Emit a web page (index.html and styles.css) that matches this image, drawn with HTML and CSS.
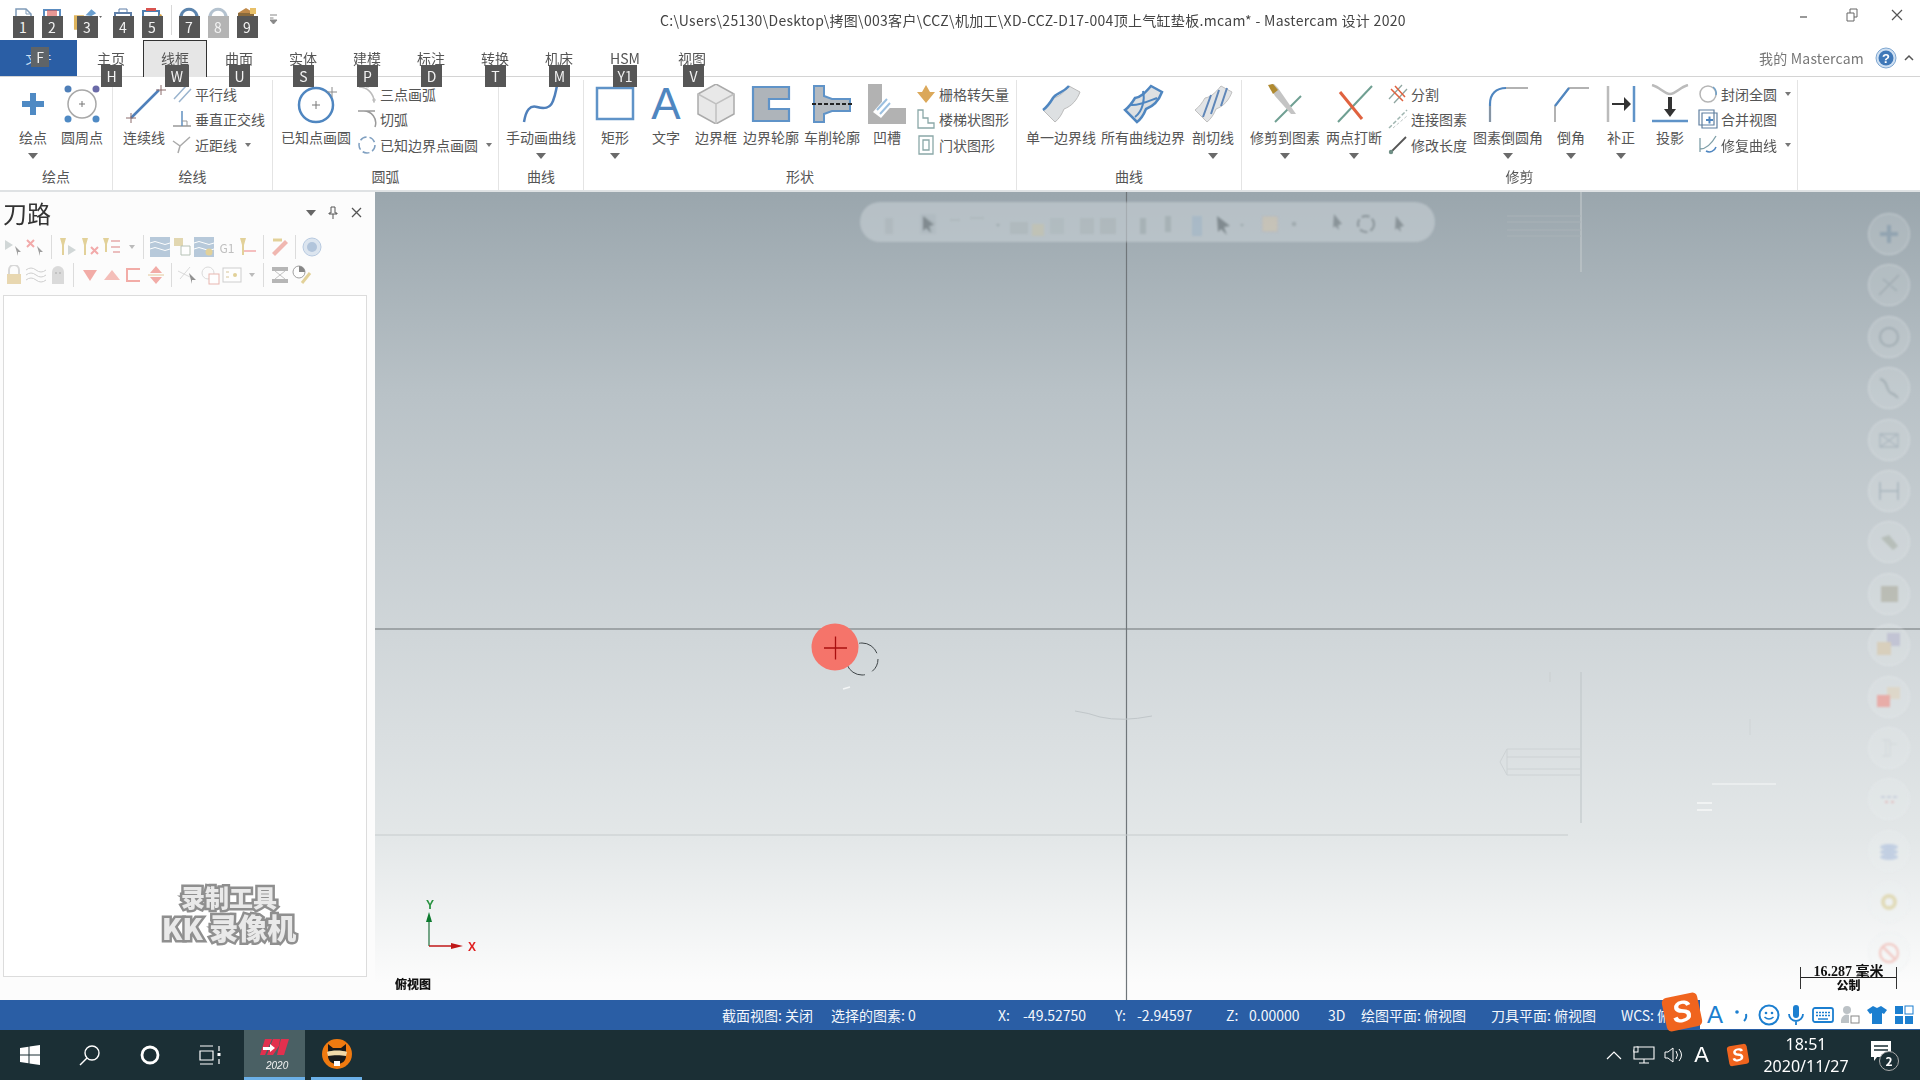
FILE: index.html
```html
<!DOCTYPE html>
<html lang="zh-CN">
<head>
<meta charset="utf-8">
<title>Mastercam 设计 2020</title>
<link rel="stylesheet" href="styles.css">
</head>
<body>
<header class="titlebar">
  <div class="quick">
    <div class="q"><svg width="22" height="24" viewBox="0 0 22 24"><path d="M4 2h10l5 5v16H4z" fill="#fff" stroke="#7f9bb8" stroke-width="1.5"/><path d="M14 2v5h5" fill="none" stroke="#7f9bb8"/></svg><span class="key">1</span></div>
    <div class="q"><svg width="22" height="24" viewBox="0 0 22 24"><path d="M3 3h16v18H3z" fill="#fff" stroke="#5a8cc0" stroke-width="2"/><path d="M6 3h10v6H6z" fill="#d9534f" opacity=".6"/></svg><span class="key">2</span></div>
    <div class="q gap6"><svg width="30" height="24" viewBox="0 0 30 24"><path d="M1 8h10l2 3h11v12H1z" fill="#dfb45c"/><path d="M13 8l6-6 5 4-5 3z" fill="#6a9fd0"/><path d="M27 9l3 0-1.500 2z" fill="#666"/></svg><span class="key">3</span></div>
    <div class="q gap7"><svg width="22" height="24" viewBox="0 0 22 24"><path d="M3 6h16v16H3z" fill="#fff" stroke="#5f7fa8" stroke-width="2"/><path d="M7 6V2h8v4" fill="none" stroke="#5f7fa8"/></svg><span class="key">4</span></div>
    <div class="q"><svg width="24" height="24" viewBox="0 0 24 24"><path d="M3 4h16v18H3z" fill="#fff" stroke="#4f7fb0" stroke-width="2"/><path d="M22 8l-5 12-2 1 0-3 5-11z" fill="#d9a03c"/><path d="M6 1h10v3H6z" fill="#d9534f"/></svg><span class="key">5</span></div>
    <div class="qsep"></div>
    <div class="q"><svg width="24" height="24" viewBox="0 0 24 24"><path d="M5 14a8 8 0 1 1 14 0" fill="none" stroke="#5c84ad" stroke-width="3"/><path d="M2 10l4 6 4-5z" fill="#5c84ad"/></svg><span class="key">7</span></div>
    <div class="q"><svg width="24" height="24" viewBox="0 0 24 24"><path d="M5 14a8 8 0 1 1 14 0" fill="none" stroke="#b4c2cf" stroke-width="3"/><path d="M22 10l-4 6-4-5z" fill="#b4c2cf"/></svg><span class="key dim">8</span></div>
    <div class="q"><svg width="24" height="24" viewBox="0 0 24 24"><path d="M3 6h16v16H3z" fill="#8a6a3c"/><path d="M3 6l8-5 8 5z" fill="#c08a4a"/><path d="M15 1h6v6h-6z" fill="#e8c068"/></svg><span class="key">9</span></div>
    <svg class="qmore" width="8" height="12" viewBox="0 0 8 12"><path d="M0 1h7M0 4l3.500 0M0 6h7l-3.500 4z" fill="#888" stroke="#888"/></svg>
  </div>
  <div class="title">C:\Users\25130\Desktop\拷图\003客户\CCZ\机加工\XD-CCZ-D17-004顶上气缸垫板.mcam* - Mastercam 设计 2020</div>
  <div class="winctl">
    <svg class="min" width="10" height="10" viewBox="0 0 10 10"><path d="M1 6h7" stroke="#777" stroke-width="1.500"/></svg>
    <svg class="restore" width="12" height="14" viewBox="0 0 12 14"><path d="M1 5h7v8H1zM4 5V1h7v8H8" fill="none" stroke="#666"/></svg>
    <svg class="close" width="12" height="12" viewBox="0 0 12 12"><path d="M1 1l10 10M11 1L1 11" stroke="#555" stroke-width="1.200"/></svg>
  </div>
</header>

<nav class="tabs">
  <div class="file"><span class="file-label">文件</span><span class="key key-f">F</span></div>
  <div class="tab">主页<span class="key">H</span></div>
  <div class="tab active">线框<span class="key">W</span></div>
  <div class="tab">曲面<span class="key">U</span></div>
  <div class="tab">实体<span class="key">S</span></div>
  <div class="tab">建模<span class="key">P</span></div>
  <div class="tab">标注<span class="key">D</span></div>
  <div class="tab">转换<span class="key">T</span></div>
  <div class="tab">机床<span class="key">M</span></div>
  <div class="tab tab-h">HSM<span class="key">Y1</span></div>
  <div class="tab tab-v">视图<span class="key">V</span></div>
  <div class="my">我的 Mastercam</div>
  <svg class="help" width="22" height="22" viewBox="0 0 22 22"><circle cx="11" cy="11" r="10" fill="#cfe0f2" stroke="#7ea6d0"/><circle cx="11" cy="11" r="7.500" fill="#3f78b8"/><text x="11" y="15.500" text-anchor="middle" class="svgq">?</text></svg>
  <svg class="collapse" width="10" height="8" viewBox="0 0 10 8"><path d="M1 6l4-4 4 4" fill="none" stroke="#555" stroke-width="1.500"/></svg>
</nav>

<section class="ribbon">
  <div class="group g1">
    <div class="gbody">
      <div class="big"><svg class="ic" viewBox="0 0 44 40"><path d="M19 9h6v8h8v6h-8v8h-6v-8h-8v-6h8z" fill="#4f8ac4"/></svg><span>绘点</span><i class="arrow"></i></div>
      <div class="big"><svg class="ic" viewBox="0 0 44 40"><circle cx="22" cy="20" r="14" fill="#fff" stroke="#a8a8a8" stroke-width="1.500"/><path d="M19 20h6M22 17v6" stroke="#777"/><circle cx="8" cy="5" r="3.500" fill="#4f7fb8"/><circle cx="36" cy="5" r="3.500" fill="#6a6aa8"/><circle cx="8" cy="35" r="3.500" fill="#4f8ac4"/><circle cx="36" cy="35" r="3.500" fill="#4f8ac4"/></svg><span>圆周点</span></div>
    </div>
    <div class="cap">绘点</div>
  </div>
  <div class="group g2">
    <div class="gbody">
      <div class="big"><svg class="ic" viewBox="0 0 44 40"><path d="M9 34L37 6" stroke="#4f80bb" stroke-width="2.500"/><path d="M4 34h10M9 29v10M34 6h10M39 1v10" stroke="#8a6a6a"/></svg><span>连续线</span></div>
      <div class="smalls">
        <div class="sm"><svg class="is" viewBox="0 0 20 20"><path d="M2 15L14 2M7 18L19 5" stroke="#9ab4ce" stroke-width="1.500"/></svg>平行线</div>
        <div class="sm"><svg class="is" viewBox="0 0 20 20"><path d="M1 17h18" stroke="#999" stroke-width="1.500"/><path d="M10 2v15" stroke="#5f8fbf" stroke-width="1.500"/><path d="M10 12h5v5" fill="none" stroke="#999"/></svg>垂直正交线</div>
        <div class="sm"><svg class="is" viewBox="0 0 20 20"><path d="M1 6l7 5-2 7M18 2l-10 9" fill="none" stroke="#aaa" stroke-width="1.500"/></svg>近距线<i class="tiny"></i></div>
      </div>
    </div>
    <div class="cap">绘线</div>
  </div>
  <div class="group g3">
    <div class="gbody">
      <div class="big"><svg class="ic" viewBox="0 0 44 40"><circle cx="22" cy="21" r="17" fill="#fff" stroke="#4f86c0" stroke-width="2.500"/><path d="M18 21h8M22 17v8" stroke="#777"/><path d="M33 8h10M38 3v10" stroke="#8a8a8a"/></svg><span>已知点画圆</span></div>
      <div class="smalls">
        <div class="sm"><svg class="is" viewBox="0 0 20 20"><path d="M2 3a15 15 0 0 1 15 15" fill="none" stroke="#bbb" stroke-width="1.500"/><path d="M15 16h4M17 14v5M1 2h3M9 3h3" stroke="#bbb"/></svg>三点画弧</div>
        <div class="sm"><svg class="is" viewBox="0 0 20 20"><path d="M1 2h17M6 2a12 12 0 0 1 12 16" fill="none" stroke="#9a9a9a" stroke-width="1.500"/></svg>切弧</div>
        <div class="sm"><svg class="is" viewBox="0 0 20 20"><circle cx="10" cy="10" r="8" fill="none" stroke="#7f9fc0" stroke-width="1.500" stroke-dasharray="7 3"/></svg>已知边界点画圆<i class="tiny"></i></div>
      </div>
    </div>
    <div class="cap">圆弧</div>
  </div>
  <div class="group g4">
    <div class="gbody">
      <div class="big"><svg class="ic" viewBox="0 0 44 40"><path d="M5 38c2-12 6-17 13-15s13 2 16-6 3-12 4-15" fill="none" stroke="#4f80bb" stroke-width="2.500"/></svg><span>手动画曲线</span><i class="arrow"></i></div>
    </div>
    <div class="cap">曲线</div>
  </div>
  <div class="group g5">
    <div class="gbody">
      <div class="big"><svg class="ic" viewBox="0 0 44 40"><rect x="4" y="4" width="36" height="31" fill="#fff" stroke="#5f93c8" stroke-width="2.500"/></svg><span>矩形</span><i class="arrow"></i></div>
      <div class="big"><div class="ic ic-a">A</div><span>文字</span></div>
      <div class="big"><svg class="ic" viewBox="0 0 44 40"><path d="M22 0l18 10v20L22 40 4 30V10z" fill="#e8e8e8" stroke="#aaa" stroke-width="1.500"/><path d="M4 10l18 10 18-10M22 20v20" fill="none" stroke="#c0c0c0" stroke-width="1.500"/></svg><span>边界框</span></div>
      <div class="big"><svg class="ic" viewBox="0 0 44 40"><path d="M4 3h36v12H20v10h20v12H4z" fill="#aeb4ba" stroke="#5f93c8" stroke-width="2.200"/></svg><span>边界轮廓</span></div>
      <div class="big"><svg class="ic" viewBox="0 0 44 40"><path d="M4 2h10v10l8 3h18v12H22l-8 3v8H4z" fill="#b4bac0" stroke="#5f93c8" stroke-width="2"/><path d="M2 20h40" stroke="#222" stroke-width="2" stroke-dasharray="4 2"/></svg><span>车削轮廓</span></div>
      <div class="big"><svg class="ic" viewBox="0 0 44 40"><path d="M3 0h14v24h24v16H3z" fill="#b2b2b2"/><path d="M8 28l14-16 8 6-14 16z" fill="#fff"/><path d="M12 26l10-11M15 30l10-11" stroke="#9cc0e0" stroke-width="2"/></svg><span>凹槽</span></div>
      <div class="smalls">
        <div class="sm"><svg class="is" viewBox="0 0 20 20"><path d="M10 1l4 7h5l-9 11L1 8h5z" fill="#dba85a"/></svg>栅格转矢量</div>
        <div class="sm"><svg class="is" viewBox="0 0 20 20"><path d="M2 1h5v8h5v5h6v5H2z" fill="#fff" stroke="#8aa8a8" stroke-width="1.300"/></svg>楼梯状图形</div>
        <div class="sm"><svg class="is" viewBox="0 0 20 20"><path d="M3 1h14v18H3zM7 5h6v10H7z" fill="none" stroke="#8aa8a8" stroke-width="1.300"/></svg>门状图形</div>
      </div>
    </div>
    <div class="cap">形状</div>
  </div>
  <div class="group g6">
    <div class="gbody">
      <div class="big"><svg class="ic" viewBox="0 0 44 40"><path d="M14 14c6-1 10-5 16-12l11 6c-3 8-8 14-16 17-2 5-5 10-9 13L4 26c4-3 7-7 10-12z" fill="#dde0e2" stroke="#bbb"/><path d="M4 26c4-3 7-7 10-12s10-5 16-12" fill="none" stroke="#4f86c0" stroke-width="2.500"/></svg><span>单一边界线</span></div>
      <div class="big"><svg class="ic" viewBox="0 0 44 40"><path d="M14 14c6-1 10-5 16-12l11 6c-3 8-8 14-16 17-2 5-5 10-9 13L4 26c4-3 7-7 10-12z" fill="#dde0e2" stroke="#4f86c0" stroke-width="2.500"/><path d="M10 21c8 1 20-5 26-7M22 7c2 8 0 20-8 26" fill="none" stroke="#4f86c0" stroke-width="2"/></svg><span>所有曲线边界</span></div>
      <div class="big"><svg class="ic" viewBox="0 0 44 40"><path d="M14 14c6-1 10-5 16-12l11 6c-3 8-8 14-16 17-2 5-5 10-9 13L4 26c4-3 7-7 10-12z" fill="#e2e4e6" stroke="#c0c0c0"/><path d="M12 33l8-22M20 30l8-24M30 22l6-18" stroke="#5f86b8" stroke-width="2"/></svg><span>剖切线</span><i class="arrow"></i></div>
    </div>
    <div class="cap">曲线</div>
  </div>
  <div class="group g7">
    <div class="gbody">
      <div class="big"><svg class="ic" viewBox="0 0 44 40"><path d="M12 38L38 12" stroke="#6f9f92" stroke-width="2"/><path d="M6 1l5-1 4 4 18 26-5 0L12 12z" fill="#c4c4c4"/><path d="M5 1l5-1 5 6-5 4z" fill="#b08a30"/></svg><span>修剪到图素</span><i class="arrow"></i></div>
      <div class="big"><svg class="ic" viewBox="0 0 44 40"><path d="M6 38L40 2" stroke="#6f9f92" stroke-width="2"/><path d="M8 8l22 27" stroke="#e0623f" stroke-width="3"/></svg><span>两点打断</span><i class="arrow"></i></div>
      <div class="smalls">
        <div class="sm"><svg class="is" viewBox="0 0 20 20"><path d="M1 15L14 1M6 19L19 5" stroke="#8fa5a0" stroke-width="1.300"/><path d="M3 5l12 12M7 2l10 11" stroke="#e0623f" stroke-width="1.500"/></svg>分割</div>
        <div class="sm"><svg class="is" viewBox="0 0 20 20"><path d="M1 19L19 1" stroke="#9fb5b0" stroke-width="1.500" stroke-dasharray="4 2"/><path d="M5 19L19 7" stroke="#c0c8c8" stroke-dasharray="3 2"/></svg>连接图素</div>
        <div class="sm"><svg class="is" viewBox="0 0 20 20"><path d="M2 18L18 2" stroke="#555" stroke-width="1.800"/><circle cx="3" cy="17" r="2.200" fill="#6f8f85"/></svg>修改长度</div>
      </div>
      <div class="big"><svg class="ic" viewBox="0 0 44 40"><path d="M4 38V20C4 10 10 4 20 4" fill="none" stroke="#4f86c0" stroke-width="2.200"/><path d="M4 38V22M20 4h22" stroke="#999" stroke-width="1.500"/></svg><span>图素倒圆角</span><i class="arrow"></i></div>
      <div class="big"><svg class="ic" viewBox="0 0 44 40"><path d="M6 38V22L20 4h20" fill="none" stroke="#999" stroke-width="1.500"/><path d="M6 22L20 4" stroke="#4f86c0" stroke-width="2.200"/></svg><span>倒角</span><i class="arrow"></i></div>
      <div class="big"><svg class="ic" viewBox="0 0 44 40"><path d="M9 2v36" stroke="#bbb" stroke-width="2.500"/><path d="M35 2v36" stroke="#5f93c8" stroke-width="2.500"/><path d="M13 19h12v-6l7 7-7 7v-6H13z" fill="#333"/></svg><span>补正</span><i class="arrow"></i></div>
      <div class="big"><svg class="ic" viewBox="0 0 44 40"><path d="M4 1c8 2 12 9 18 9s10-7 18-9" fill="none" stroke="#bbb" stroke-width="2.500"/><path d="M20 13h4v12h4l-6 8-6-8h4z" fill="#333"/><path d="M4 37h36" stroke="#5f93c8" stroke-width="2.500"/></svg><span>投影</span></div>
      <div class="smalls">
        <div class="sm"><svg class="is" viewBox="0 0 20 20"><circle cx="10" cy="10" r="8" fill="#fff" stroke="#b5b5b5" stroke-width="1.500"/><path d="M15 3a8 8 0 0 1 3 8" fill="none" stroke="#6fa0c8" stroke-width="1.500"/></svg>封闭全圆<i class="tiny"></i></div>
        <div class="sm"><svg class="is" viewBox="0 0 20 20"><path d="M1 1h15v15H1zM4 4h15v15H4z" fill="none" stroke="#5f7f9f" stroke-width="1.200"/><path d="M8 11h7M11.500 7.500v7" stroke="#4f86c0" stroke-width="2"/></svg>合并视图</div>
        <div class="sm"><svg class="is" viewBox="0 0 20 20"><path d="M2 3v14M2 14C8 14 14 8 18 1" fill="none" stroke="#7f9fa8" stroke-width="1.300"/><path d="M8 16a7 7 0 0 0 10-4" fill="none" stroke="#4f86c0" stroke-width="1.500"/></svg>修复曲线<i class="tiny"></i></div>
      </div>
    </div>
    <div class="cap">修剪</div>
  </div>
</section>

<main class="main">
  <aside class="panel">
    <div class="panel-head">
      <div class="panel-title">刀路</div>
      <svg class="p-arrow" width="12" height="8" viewBox="0 0 12 8"><path d="M1 1h10L6 7z" fill="#666"/></svg>
      <svg class="p-pin" width="10" height="13" viewBox="0 0 10 13"><path d="M3 1h4v6h2v1H1V7h2zM5 8v5" fill="none" stroke="#555"/></svg>
      <svg class="p-x" width="11" height="11" viewBox="0 0 11 11"><path d="M1 1l9 9M10 1l-9 9" stroke="#555" stroke-width="1.300"/></svg>
    </div>
    <div class="ptool">
      <svg class="pi" viewBox="0 0 20 20"><path d="M1 3l8 5-8 5z" fill="#c0c8c8"/><path d="M11 9l6 6-3 0 0 4z" fill="#777"/></svg>
      <svg class="pi" viewBox="0 0 20 20"><path d="M1 3l7 7M8 3l-7 7" stroke="#e88" stroke-width="2"/><path d="M11 9l6 6-3 0 0 4z" fill="#777"/></svg>
      <b class="ps"></b>
      <svg class="pi" viewBox="0 0 20 20"><path d="M2 1h6L6 8v10H4V8z" fill="#d8c070"/><path d="M10 8l8 5-8 5z" fill="#c0c8c8"/></svg>
      <svg class="pi" viewBox="0 0 20 20"><path d="M2 1h6L6 8v10H4V8z" fill="#d8c070"/><path d="M11 10l7 7M18 10l-7 7" stroke="#e88" stroke-width="2"/></svg>
      <svg class="pi" viewBox="0 0 20 20"><path d="M1 1h6L5 7v8H3V7z" fill="#d8c070"/><path d="M9 4h9M9 10h9M11 15h7" stroke="#d88" stroke-width="1.500"/></svg>
      <i class="pd"></i>
      <b class="ps"></b>
      <svg class="pi" viewBox="0 0 20 20"><rect width="20" height="20" y="0" fill="#9ab4cc"/><path d="M0 6q5-3 10 0t10 0M0 12q5-3 10 0t10 0" fill="none" stroke="#fff"/></svg>
      <svg class="pi" viewBox="0 0 20 20"><path d="M2 1h9v8H2z" fill="#d8c890"/><path d="M9 9h9v9H9z" fill="#fff" stroke="#9aaa9a"/></svg>
      <svg class="pi" viewBox="0 0 20 20"><rect width="20" height="20" fill="#9ab4cc"/><path d="M0 6q5-3 10 0t10 0M0 12q5-3 10 0t10 0" fill="none" stroke="#fff"/><circle cx="15" cy="15" r="3.500" fill="#d8c070"/></svg>
      <span class="pg">G1</span>
      <svg class="pi" viewBox="0 0 20 20"><path d="M2 1h6L6 8v10H4V8z" fill="#d8c070"/><path d="M6 14h12" stroke="#e88" stroke-width="1.500"/></svg>
      <b class="ps"></b>
      <svg class="pi" viewBox="0 0 20 20"><path d="M2 16L15 3l3 3L5 19z" fill="#eb9a90"/><path d="M3 3h9" stroke="#d8c070" stroke-width="3"/></svg>
      <b class="ps"></b>
      <svg class="pi" viewBox="0 0 20 20"><circle cx="10" cy="10" r="9" fill="#cfdcea" stroke="#9ab4d4"/><circle cx="10" cy="10" r="5" fill="#94aece"/></svg>
    </div>
    <div class="ptool">
      <svg class="pi" viewBox="0 0 20 20"><path d="M5 9V5a5 5 0 0 1 10 0v4" fill="none" stroke="#c8c8c8" stroke-width="2"/><rect x="3" y="9" width="14" height="10" fill="#e0c890"/></svg>
      <svg class="pi" viewBox="0 0 20 20"><path d="M0 5q5-4 10 0t10 0M0 10q5-4 10 0t10 0M0 15q5-4 10 0t10 0" fill="none" stroke="#bbb"/></svg>
      <svg class="pi" viewBox="0 0 20 20"><path d="M4 19V7a6 6 0 0 1 12 0v12z" fill="#ccc"/><path d="M7 8h2M11 8h2" stroke="#888"/></svg>
      <b class="ps"></b>
      <svg class="pi" viewBox="0 0 20 20"><path d="M3 5h14l-7 11z" fill="#ef8b84"/></svg>
      <svg class="pi" viewBox="0 0 20 20"><path d="M10 5l8 10H2z" fill="#f2a49e"/></svg>
      <svg class="pi" viewBox="0 0 20 20"><path d="M16 4H3v12h13" fill="none" stroke="#ef8b84" stroke-width="2"/></svg>
      <svg class="pi" viewBox="0 0 20 20"><path d="M10 1l6 7H4zM10 19l6-7H4z" fill="#ef8b84"/><path d="M2 10h16" stroke="#d8b070"/></svg>
      <b class="ps"></b>
      <svg class="pi" viewBox="0 0 20 20"><path d="M0 6l12 6M2 14L12 2" stroke="#ccc"/><path d="M11 8l7 7-4 0 0 4z" fill="#666"/></svg>
      <svg class="pi" viewBox="0 0 20 20"><circle cx="8" cy="8" r="6" fill="none" stroke="#ccc"/><rect x="9" y="9" width="10" height="10" fill="#fff" stroke="#e09a90"/></svg>
      <svg class="pi" viewBox="0 0 20 20"><rect x="1" y="3" width="18" height="14" fill="#fff" stroke="#bbb"/><path d="M4 7h3M4 12h3" stroke="#c8b070"/><circle cx="13" cy="10" r="2" fill="#d8c070"/></svg>
      <i class="pd"></i>
      <b class="ps"></b>
      <svg class="pi" viewBox="0 0 20 20"><path d="M2 2h16v4H2zM2 14h16v4H2z" fill="#999"/><path d="M5 6l5 4 5-4M5 14l5-4 5 4" fill="none" stroke="#aaa"/></svg>
      <svg class="pi" viewBox="0 0 20 20"><circle cx="7" cy="7" r="6" fill="#fff" stroke="#777"/><path d="M7 1a6 6 0 0 1 6 6H7z" fill="#555"/><path d="M10 18l8-10" stroke="#d8c070" stroke-width="3"/></svg>
    </div>
    <div class="plist">
      <div class="wm"><div class="wm1">录制工具</div><div class="wm2">KK 录像机</div></div>
    </div>
  </aside>

  <div class="view">
    <svg class="geo" width="1545" height="808" viewBox="0 0 1545 808">
      <path d="M0 437h1545" stroke="#6f7477" stroke-width="1.200"/>
      <path d="M751.500 0v808" stroke="#70767a" stroke-width="1.200"/>
      <path d="M0 643h1193" stroke="#c6cbcd"/>
      <path d="M1206 0v80M1206 480v151" stroke="#c2c8cb" stroke-width="1.200"/>
      <path d="M1132 24h74M1132 30h74M1132 38h74M1132 44h74" stroke="#a9b2b7"/>
      <path d="M1206 557h-74l-7 13 7 13h74M1132 565h74M1132 577h74M1132 557v26" fill="none" stroke="#cdd2d4"/>
      <path d="M1175 480v10" stroke="#cfd4d6" stroke-width="2"/>
      <path d="M1337 592h64" stroke="#f6f8f8" stroke-width="1.200"/>
      <path d="M1322 611h15M1322 618h15" stroke="#f6f8f8" stroke-width="1.500"/>
      <path d="M1375 527v16" stroke="#cfd4d6"/>
      <path d="M700 519q14 2 25 6 22 5 52-1" fill="none" stroke="#c0c6c9"/>
      <path d="M468 497l7-2" stroke="#f4f6f6" stroke-width="1.500"/>
      <circle cx="487" cy="467" r="16" fill="none" stroke="#3f4548" stroke-dasharray="14 8 22 6" stroke-width="1"/>
      <circle cx="460" cy="455" r="23.500" fill="#f5746a"/>
      <path d="M449 456h23M460.500 444.500v23" stroke="#a90f0f" stroke-width="1.300"/>
      <path d="M54 754V724" stroke="#1f6f3c" stroke-width="1.200"/>
      <path d="M54 720l-3 10h6z" fill="#0c7a2e"/>
      <path d="M54 754h30" stroke="#c01818" stroke-width="1.500"/>
      <path d="M88 754l-12-3v6z" fill="#c01818"/>
      <text x="55" y="717" class="ax axy">Y</text>
      <text x="97" y="759" class="ax axx">X</text>
    </svg>

    <div class="float">
      <svg width="575" height="40" viewBox="0 0 575 40">
        <g fill="#8e9a9e"><path d="M25 16h8v16h-8zM65 14l12 8-6 1 2 8-5-6-3 3z" opacity=".35"/><path d="M60 12h16v20H60z" opacity=".25"/><path d="M63 14l11 9-5 1 2 7-5-5-3 3z" fill="#5c676b"/></g>
        <path d="M90 18h10M110 16h14" stroke="#a9b4b8" stroke-width="2"/>
        <path d="M136 22l4 0-2 3z" fill="#8e9a9e"/>
        <rect x="150" y="20" width="18" height="12" fill="#aab5b8"/>
        <rect x="172" y="22" width="12" height="12" fill="#c6c2ab"/>
        <rect x="190" y="16" width="14" height="16" fill="#aab5b8" opacity=".7"/>
        <rect x="220" y="16" width="14" height="16" fill="#aab5b8"/>
        <rect x="240" y="16" width="16" height="16" fill="#a9b3b6"/>
        <rect x="280" y="16" width="6" height="16" fill="#9ca7ab"/>
        <rect x="305" y="14" width="6" height="16" fill="#9ca7ab"/>
        <rect x="332" y="14" width="10" height="20" fill="#9fb4c6"/>
        <path d="M357 14l13 10-6 1 3 8-6-6-3 3z" fill="#5c676b"/>
        <path d="M380 22l4 0-2 3z" fill="#8e9a9e"/>
        <rect x="402" y="14" width="16" height="16" fill="#d0c4ae" stroke="#a0a8c0" stroke-dasharray="2 2"/>
        <rect x="432" y="20" width="4" height="4" fill="#8e9a9e"/>
        <path d="M474 12l8 10-4 1 1 5-4-4-2 2z" fill="#6b757a"/>
        <circle cx="506" cy="22" r="8" fill="none" stroke="#6b757a" stroke-width="2" stroke-dasharray="8 3"/>
        <path d="M536 14l8 10-4 1 1 5-4-4-2 2z" fill="#6b757a"/>
      </svg>
    </div>

    <div class="rail">
      <div class="rb"><svg class="ri" viewBox="0 0 24 24"><path d="M10 3h4v7h7v4h-7v7h-4v-7H3v-4h7z" fill="#7f95a8"/></svg></div>
      <div class="rb"><svg class="ri" viewBox="0 0 24 24"><path d="M2 22L22 2M6 6l6 5M14 13l6 5" stroke="#8f9ca3" stroke-width="1.500"/></svg></div>
      <div class="rb"><svg class="ri" viewBox="0 0 24 24"><circle cx="12" cy="12" r="9" fill="none" stroke="#8f9ca3" stroke-width="2"/></svg></div>
      <div class="rb"><svg class="ri" viewBox="0 0 24 24"><path d="M3 3c8 1 6 12 11 14s5 3 7 5" fill="none" stroke="#8f9ca3" stroke-width="2"/></svg></div>
      <div class="rb"><svg class="ri" viewBox="0 0 24 24"><path d="M3 6h18v13H3zM3 6l18 13M21 6L3 19" fill="none" stroke="#9aa8b2" stroke-width="1.300"/></svg></div>
      <div class="rb"><svg class="ri" viewBox="0 0 24 24"><path d="M3 3v18M21 3v18M3 12h18" stroke="#8fa0aa" stroke-width="1.500"/></svg></div>
      <div class="rb"><svg class="ri" viewBox="0 0 24 24"><path d="M4 8l8-3 9 11-5 4z" fill="#a7aea5"/></svg></div>
      <div class="rb"><svg class="ri" viewBox="0 0 24 24"><rect x="4" y="4" width="17" height="16" fill="#aaa99a"/></svg></div>
      <div class="rb"><svg class="ri" viewBox="0 0 24 24"><rect x="10" y="0" width="13" height="13" fill="#b4b4cc"/><rect x="0" y="9" width="14" height="13" fill="#d9c6a4"/></svg></div>
      <div class="rb"><svg class="ri" viewBox="0 0 24 24"><rect x="10" y="2" width="13" height="12" fill="#e0d2b8"/><rect x="0" y="10" width="13" height="12" fill="#f08a82"/></svg></div>
      <div class="rb"><svg class="ri" viewBox="0 0 24 24"><path d="M5 4h8v16H5M13 8h7M9 4v16" fill="none" stroke="#c8ccd0"/></svg></div>
      <div class="rb"><svg class="ri" viewBox="0 0 24 24"><path d="M4 10h4M10 10h4M16 10h4" stroke="#b8c0d4" stroke-width="2"/><path d="M8 15h3M14 15h3" stroke="#e0a8a8" stroke-width="2"/></svg></div>
      <div class="rb"><svg class="ri" viewBox="0 0 24 24"><ellipse cx="12" cy="8" rx="9" ry="3" fill="#a8bcdc"/><ellipse cx="12" cy="13" rx="9" ry="3" fill="#a8bcdc"/><ellipse cx="12" cy="18" rx="9" ry="3" fill="#a8bcdc"/></svg></div>
      <div class="rb"><svg class="ri" viewBox="0 0 24 24"><circle cx="12" cy="12" r="6" fill="none" stroke="#d8cc94" stroke-width="4"/></svg></div>
      <div class="rb"><svg class="ri" viewBox="0 0 24 24"><circle cx="12" cy="12" r="9" fill="none" stroke="#efb0a8" stroke-width="2.500"/><path d="M6 6l12 12" stroke="#efb0a8" stroke-width="2.500"/></svg></div>
    </div>

    <div class="vname">俯视图</div>
    <div class="scale">
      <div class="s1">16.287 毫米</div>
      <div class="s2">公制</div>
    </div>
  </div>
</main>

<footer class="status">
  <span class="st s-a">截面视图: 关闭</span>
  <span class="st s-b">选择的图素: 0</span>
  <span class="st s-c">X:</span><span class="st s-d">-49.52750</span>
  <span class="st s-e">Y:</span><span class="st s-f">-2.94597</span>
  <span class="st s-g">Z:</span><span class="st s-h">0.00000</span>
  <span class="st s-i">3D</span>
  <span class="st s-j">绘图平面: 俯视图</span>
  <span class="st s-k">刀具平面: 俯视图</span>
  <span class="st s-l">WCS: 俯</span>
  <div class="ime">
    <span class="sogou">S</span>
    <span class="ime-a">A</span>
    <svg width="16" height="20" viewBox="0 0 16 20"><circle cx="3" cy="7" r="1.800" fill="#1c7fd0"/><path d="M12 9q1 4-2 7" fill="none" stroke="#1c7fd0" stroke-width="2"/></svg>
    <svg width="22" height="22" viewBox="0 0 22 22"><circle cx="11" cy="11" r="9.500" fill="none" stroke="#1c7fd0" stroke-width="2"/><circle cx="8" cy="9" r="1.300" fill="#1c7fd0"/><circle cx="14" cy="9" r="1.300" fill="#1c7fd0"/><path d="M6.500 13q4.500 4 9 0" fill="none" stroke="#1c7fd0" stroke-width="1.600"/></svg>
    <svg width="18" height="22" viewBox="0 0 18 22"><rect x="6" y="1" width="6" height="13" rx="3" fill="#1c7fd0"/><path d="M2 10a7 7 0 0 0 14 0M9 17v4" fill="none" stroke="#1c7fd0" stroke-width="1.800"/></svg>
    <svg width="22" height="18" viewBox="0 0 22 18"><rect x="1" y="2" width="20" height="14" rx="2" fill="none" stroke="#1c7fd0" stroke-width="1.800"/><path d="M4 6.500h14M4 9.500h14" stroke="#1c7fd0" stroke-width="1.500" stroke-dasharray="2 1"/><path d="M6 13h10" stroke="#1c7fd0" stroke-width="1.500"/></svg>
    <svg width="20" height="20" viewBox="0 0 20 20"><circle cx="7" cy="5" r="4" fill="#bcc2c6"/><path d="M1 18v-3a6 6 0 0 1 8-5v8z" fill="#bcc2c6"/><rect x="11" y="11" width="8" height="7" fill="#fff" stroke="#888"/></svg>
    <svg width="22" height="20" viewBox="0 0 22 20"><path d="M7 1l4 2 4-2 6 4-3 4-2-1v11H6V8L4 9 1 5z" fill="#1c7fd0"/></svg>
    <svg width="20" height="20" viewBox="0 0 20 20"><rect x="1" y="1" width="8" height="8" fill="#1c7fd0"/><rect x="11" y="1" width="8" height="8" fill="#fff" stroke="#1c7fd0"/><rect x="1" y="11" width="8" height="8" fill="#1c7fd0"/><rect x="11" y="11" width="8" height="8" fill="#1c7fd0"/></svg>
  </div>
</footer>

<footer class="taskbar">
  <div class="tb"><svg width="20" height="20" viewBox="0 0 20 20"><path d="M0 3l8.500-1.200V9.500H0zM9.500 1.600L20 0v9.500H9.500zM0 10.500h8.500v7.700L0 17zM9.500 10.500H20V20L9.500 18.400z" fill="#fff"/></svg></div>
  <div class="tb"><svg width="22" height="22" viewBox="0 0 22 22"><circle cx="13" cy="9" r="7" fill="none" stroke="#fff" stroke-width="1.400"/><path d="M8 14l-7 7" stroke="#fff" stroke-width="1.500"/></svg></div>
  <div class="tb"><svg width="20" height="20" viewBox="0 0 20 20"><circle cx="10" cy="10" r="8" fill="none" stroke="#fff" stroke-width="2.800"/></svg></div>
  <div class="tb"><svg width="22" height="20" viewBox="0 0 22 20"><path d="M1 1h13M1 19h13M1 6h13v9H1zM20 1v5M20 14v5" fill="none" stroke="#fff" stroke-width="1.200"/><rect x="18.500" y="8" width="3" height="3" fill="#fff"/></svg></div>
  <div class="tb-app on-a">
    <svg width="30" height="22" viewBox="0 0 30 22"><path d="M5 0h7L5 16H0zM13 0h7l-1 7-6 9H7zM21 0h8l-5 16h-7z" fill="#e2304e"/><path d="M3 8h7V5l5 4-5 4v-2H3z" fill="#fff"/></svg>
    <span class="yr">2020</span>
  </div>
  <div class="tb-app on-b">
    <svg width="30" height="30" viewBox="0 0 30 30"><circle cx="15" cy="15" r="15" fill="#f07a10"/><path d="M6 5l5 4h8l5-4v12c0 5-4 8-9 8s-9-3-9-8z" fill="#1a1a1a"/><path d="M5 13c4-2 16-2 20 0l-1 4c-5-1-13-1-18 0z" fill="#f3d9a8"/><rect x="12" y="22" width="6" height="5" fill="#fff"/></svg>
  </div>
  <div class="tray">
    <svg class="ti1" width="16" height="10" viewBox="0 0 16 10"><path d="M1 9l7-7 7 7" fill="none" stroke="#fff" stroke-width="1.200"/></svg>
    <svg class="ti2" width="22" height="18" viewBox="0 0 22 18"><path d="M4 1h17v12H1V4h3zM11 13v4M6 17h10" fill="none" stroke="#fff" stroke-width="1.100"/><rect x="1" y="1" width="4" height="5" fill="#1b2f35" stroke="#fff"/></svg>
    <svg class="ti3" width="22" height="18" viewBox="0 0 22 18"><path d="M1 6h3l5-4v14l-5-4H1z" fill="none" stroke="#fff"/><path d="M12 5q3 4 0 8M15 3q5 6 0 12" fill="none" stroke="#fff"/></svg>
    <span class="ti4">A</span>
    <span class="sogou2">S</span>
    <div class="clock"><div>18:51</div><div>2020/11/27</div></div>
    <div class="notif"><svg width="22" height="22" viewBox="0 0 22 22"><path d="M1 1h20v16H7l-3 4v-4H1z" fill="#fff"/><path d="M4 6h14M4 10h14" stroke="#1b2f35" stroke-width="1.500"/></svg><span class="nbadge">2</span></div>
  </div>
</footer>
</body>
</html>
```
FILE: styles.css
```css
* { box-sizing: border-box; }
html, body { margin: 0; padding: 0; }
body {
  width: 1920px; height: 1080px; overflow: hidden; background: #fff;
  display: flex; flex-direction: column;
  font-family: "Noto Sans CJK SC", "Noto Sans", sans-serif;
  font-size: 14px; color: #444;
  filter: blur(.4px);
}
.key {
  position: absolute; width: 21px; height: 22px; background: #565656; color: #f2f2f2;
  font-size: 14px; line-height: 22px; text-align: center; font-style: normal; z-index: 5;
}
.key.dim { background: #b4b4b4; }

/* title */
.titlebar { height: 40px; flex: none; display: flex; align-items: flex-start; position: relative; }
.quick { width: 660px; flex: none; display: flex; align-items: flex-start; padding: 7px 0 0 8.500px; }
.q { width: 29px; height: 30px; position: relative; display: flex; justify-content: center; }
.q .key { left: 4px; top: 9px; }
.gap6 { margin-left: 6px; }
.gap7 { margin-left: 7px; }
.qsep { width: 1px; height: 30px; background: #d8d8d8; margin: -2px 3px 0 4px; }
.qmore { margin: 7px 0 0 8px; }
.title { font-size: 14px; line-height: 40px; color: #444; white-space: nowrap; width: 760px; flex: none; letter-spacing: .3px; }
.winctl { flex: 1; position: relative; height: 30px; display: flex; align-items: center; padding-left: 379px; }
.min { margin-top: 2px; }
.restore { margin-left: 37px; }
.close { margin-left: 33px; }

/* tabs */
.tabs { height: 37px; flex: none; display: flex; align-items: stretch; border-bottom: 1px solid #d4d4d4; position: relative; }
.file { width: 77px; height: 36px; background: #2a5ea5; margin-right: 2px; position: relative; color: #cfe0f4; line-height: 36px; text-align: center; font-size: 13px; }
.key-f { left: 31px; top: 7px; width: 18px; height: 20px; line-height: 20px; background: #5f6468; }
.tab { width: 64px; height: 37px; line-height: 37px; text-align: center; position: relative; color: #555; font-size: 14px; }
.tab .key { left: 22px; top: 25px; }
.tab.active { background: #e6e6e6; border: 1px solid #333; border-bottom: none; line-height: 35px; }
.tab.active .key { left: 21px; top: 24px; width: 24px; }
.tab-h { width: 68px; }
.tab-h .key { width: 24px; }
.tab-v { width: 66px; margin-left: 0; }
.tab.tab-v .key { left: 24px; }
.my { margin-left: auto; line-height: 37px; color: #777; font-size: 14px; margin-right: 11px; letter-spacing: .2px; }
.help { align-self: center; }
.collapse { align-self: center; margin: 0 6px 0 7px; }
.svgq { font: bold 13px "Liberation Sans", sans-serif; fill: #fff; }
.ic-a { font: 44px/40px "Liberation Sans", sans-serif; color: #4f86c0; text-align: center; }

/* ribbon */
.ribbon { height: 115px; flex: none; display: flex; border-bottom: 2px solid #dfe2e4; background: #fff; }
.group { flex: none; display: flex; flex-direction: column; border-right: 1px solid #e4e4e4; margin-top: 3px; }
.gbody { height: 83px; padding-top: 3px; display: grid; grid-template-rows: 80px; }
.cap { height: 25px; line-height: 26px; text-align: center; color: #555; font-size: 14px; }
.g1 { width: 113px; } .g1 .gbody { grid-template-columns: 54px 44px; padding-left: 6px; }
.g2 { width: 160px; } .g2 .gbody { grid-template-columns: 56px 104px; padding-left: 3px; }
.g3 { width: 226px; } .g3 .gbody { grid-template-columns: 74px 146px; padding-left: 6px; }
.g4 { width: 85px; } .g4 .gbody { grid-template-columns: 84px; }
.g5 { width: 433px; } .g5 .gbody { grid-template-columns: 50px 52px 48px 62px 60px 50px 105px; padding-left: 6px; }
.g6 { width: 225px; } .g6 .gbody { grid-template-columns: 74px 90px 50px; padding-left: 7px; }
.g7 { width: 556px; } .g7 .gbody { grid-template-columns: 74px 64px 86px 72px 54px 46px 52px 102px; padding-left: 6px; }
.big { display: flex; flex-direction: column; align-items: center; white-space: nowrap; color: #555; }
.ic { width: 44px; height: 40px; flex: none; margin-top: 1px; }
.big span { line-height: 20px; margin-top: 3px; font-size: 14px; }
.arrow { width: 0; height: 0; border: 5px solid transparent; border-top: 6px solid #6a6a6a; border-bottom: 0; margin-top: 6px; }
.smalls { display: flex; flex-direction: column; margin-top: -2px; padding-left: 2px; }
.g2 .smalls { padding-left: 0; }
.g3 .smalls { padding-left: 4px; }
.g5 .smalls { padding-left: 4px; }
.sm { height: 25.500px; display: flex; align-items: center; white-space: nowrap; color: #555; font-size: 14px; }
.is { width: 20px; height: 20px; margin-right: 3px; flex: none; }
.tiny { width: 0; height: 0; border: 3px solid transparent; border-top: 4px solid #777; border-bottom: 0; margin-left: 8px; }

/* main */
.main { flex: 1; min-height: 0; display: flex; height: 808px; }
.panel { width: 375px; flex: none; background: #fcfcfc; display: flex; flex-direction: column; }
.panel-head { height: 41px; display: flex; align-items: center; padding: 0 13px 0 3px; flex: none; }
.panel-title { font-size: 24px; color: #333; line-height: 34px; flex: 1; }
.p-pin { margin-left: 11px; }
.p-x { margin-left: 13px; }
.ptool { height: 28px; display: flex; align-items: center; padding-left: 4px; flex: none; }
.pi { width: 20px; height: 20px; margin-right: 2px; flex: none; opacity: .7; }
.ps { width: 1px; height: 24px; background: #dcdcdc; margin: 0 6px 0 3px; flex: none; }
.pd { width: 0; height: 0; border: 3px solid transparent; border-top: 4px solid #bbb; border-bottom: 0; margin: 0 5px; flex: none; }
.pg { width: 22px; font-size: 12px; color: #c0c0c0; text-align: center; }
.plist { margin: 6px 8px 23px 3px; flex: 1; background: #fff; border: 1px solid #dcdcdc; position: relative; }
.wm { position: absolute; left: 120px; top: 586px; width: 210px; text-align: center; font-weight: 900; color: #e9e9e9; -webkit-text-stroke: 5px #8f8f8f; paint-order: stroke fill; }
.wm1 { font-size: 24px; line-height: 30px; }
.wm2 { font-size: 29px; line-height: 30px; }

.view {
  flex: 1; position: relative; overflow: hidden;
  background: linear-gradient(to bottom, #9aa6ad 0%, #b9c2c7 25%, #d0d6d9 55%, #e3e7e8 80%, #fcfcfc 98%);
}
.geo { position: absolute; left: 0; top: 0; }
.ax { font: bold 12px "Liberation Sans", sans-serif; }
.axy { fill: #27923f; text-anchor: middle; }
.axx { fill: #e02020; text-anchor: middle; }
.float { position: absolute; left: 485px; top: 10px; width: 575px; height: 40px; border-radius: 20px; background: rgba(200,209,213,.6); filter: blur(1.2px); }
.float svg { opacity: .6; }
.rail { position: absolute; right: 8px; top: 21px; width: 44px; display: flex; flex-direction: column; gap: 9.400px; filter: blur(.8px); }
.rb { width: 42px; height: 42px; border-radius: 50%; background: rgba(240,243,244,.18); border: 1px solid rgba(235,238,240,.4); display: flex; align-items: center; justify-content: center; }
.ri { width: 24px; height: 24px; opacity: .6; }
.vname { position: absolute; left: 20px; top: 784px; font-size: 12px; font-weight: 900; color: #111; line-height: 16px; }
.scale { position: absolute; left: 1425px; top: 775px; width: 97px; height: 22px; border-left: 1px solid #333; border-right: 1px solid #333; text-align: center; font-family: "Liberation Serif", "Noto Sans CJK SC", serif; font-weight: bold; color: #111; font-size: 14px; }
.s1 { line-height: 10px; border-bottom: 1px solid #222; height: 11px; }
.s2 { line-height: 14px; font-size: 12px; font-family: "Noto Sans CJK SC", sans-serif; font-weight: 900; }

/* status */
.status { height: 30px; flex: none; background: #2a5ea5; color: #f4f7fb; position: relative; font-size: 14px; line-height: 30px; display: flex; padding-left: 722px; white-space: nowrap; overflow: visible; }
.st { flex: none; }
.s-a { width: 109px; } .s-b { width: 167px; } .s-c { width: 25px; } .s-d { width: 92px; }
.s-e { width: 22px; } .s-f { width: 89px; } .s-g { width: 23px; } .s-h { width: 79px; }
.s-i { width: 33px; } .s-j { width: 130px; } .s-k { width: 130px; } .s-l { width: 60px; }
.ime { position: absolute; left: 1700px; right: 0; top: 0; height: 29px; background: #fff; display: grid; grid-template-columns: repeat(8, 27px); justify-items: center; align-items: center; padding-left: 1.500px; }
.sogou { position: absolute; left: -36px; top: -5px; width: 36px; height: 34px; border-radius: 5px; background: #f0641e; color: #fff; font: italic 900 30px/34px "Liberation Sans", sans-serif; text-align: center; transform: rotate(-12deg); }
.ime-a { font: 24px/29px "Liberation Sans", sans-serif; color: #1c7fd0; }

/* taskbar */
.taskbar { height: 50px; flex: none; background: #1b2f35; display: flex; align-items: stretch; color: #fff; }
.tb { width: 60px; display: flex; align-items: center; justify-content: center; }
.tb-app { display: flex; flex-direction: column; align-items: center; justify-content: center; position: relative; border-bottom: 3px solid #6bb0e8; }
.on-a { width: 61px; margin-left: 4px; background: #4a6064; padding-bottom: 8px; }
.on-b { width: 51px; margin-left: 6px; }
.yr { position: absolute; left: 22px; top: 30px; font: italic 10px/12px "Liberation Sans", sans-serif; color: #f2f2f2; }
.tray { margin-left: auto; display: flex; align-items: center; padding-right: 24px; }
.ti2 { margin-left: 11px; }
.ti3 { margin-left: 9px; }
.ti4 { font: 22px/30px "Liberation Sans", sans-serif; margin-left: 8px; }
.sogou2 { width: 20px; height: 20px; background: #f0641e; color: #fff; border-radius: 3px; font: italic 900 18px/20px "Liberation Sans", sans-serif; text-align: center; transform: rotate(-10deg); margin-left: 19px; }
.clock { width: 100px; text-align: center; margin-left: 8px; font-size: 16px; line-height: 22px; font-family: "Noto Sans", sans-serif; }
.notif { margin-left: 14px; position: relative; width: 26px; height: 30px; }
.nbadge { position: absolute; left: 9px; top: 11px; width: 20px; height: 20px; border-radius: 50%; background: #1b2f35; border: 1px solid #aaa; font-size: 12px; font-weight: bold; line-height: 18px; text-align: center; }
```
